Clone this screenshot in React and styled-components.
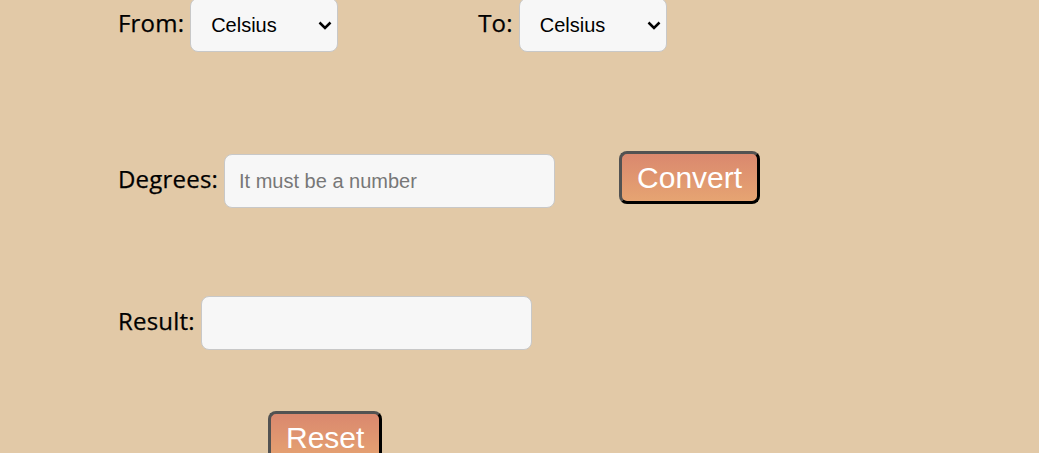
import React from "react";
import styled, { createGlobalStyle } from "styled-components";

const GlobalStyle = createGlobalStyle`
  body {
    margin: 0;
    background: #e2c9a7;
    font-family: "Open Sans", "Liberation Sans", sans-serif;
    overflow: hidden;
  }
`;

const Chevron = () => (
  <Arrow width="14" height="9" viewBox="0 0 14 9" aria-hidden="true">
    <path d="M1.5 1.5 L7 7 L12.5 1.5" fill="none" stroke="#000" strokeWidth="2.5" />
  </Arrow>
);

const UnitSelect = ({ value, onChange }) => (
  <SelectWrap>
    <Select value={value} onChange={onChange}>
      <option>Celsius</option>
      <option>Fahrenheit</option>
      <option>Kelvin</option>
    </Select>
    <Chevron />
  </SelectWrap>
);

const App = () => {
  const [from, setFrom] = React.useState("Celsius");
  const [to, setTo] = React.useState("Celsius");

  return (
    <>
      <GlobalStyle />
      <Page>
        <Row $top={-2}>
          <Group>
            <Label>From:</Label>
            <UnitSelect value={from} onChange={(e) => setFrom(e.target.value)} />
          </Group>
          <Group $gap={134}>
            <Label>To:</Label>
            <UnitSelect value={to} onChange={(e) => setTo(e.target.value)} />
          </Group>
        </Row>

        <Row $top={99}>
          <Label>Degrees:</Label>
          <Input placeholder="It must be a number" />
          <Button $left={58}>Convert</Button>
        </Row>

        <Row $top={88}>
          <Label>Result:</Label>
          <Input readOnly />
        </Row>

        <Row $top={61} $indent={268}>
          <Button>Reset</Button>
        </Row>
      </Page>
    </>
  );
};

const Page = styled.div`
  display: flex;
  flex-direction: column;
  padding-left: 118px;
`;
const Row = styled.div`
  display: flex;
  align-items: baseline;
  gap: 6px;
  margin-top: ${(p) => p.$top || 0}px;
  padding-left: ${(p) => (p.$indent ? p.$indent - 118 : 0)}px;
`;
const Group = styled.div`
  display: flex;
  align-items: baseline;
  gap: 6px;
  margin-left: ${(p) => p.$gap || 0}px;
`;
const Label = styled.label`
  font-family: "Open Sans", "Liberation Sans", sans-serif;
  font-size: 24px;
  letter-spacing: 0.2px;
  color: #000;
  -webkit-text-stroke: 0.25px #000;
`;
const SelectWrap = styled.div`
  position: relative;
  display: inline-flex;
`;
const Select = styled.select`
  appearance: none;
  -webkit-appearance: none;
  width: 148px;
  height: 54px;
  box-sizing: border-box;
  padding: 0 30px 0 20px;
  font-family: "Liberation Sans", Arial, sans-serif;
  font-size: 20px;
  color: #000;
  background: #f7f7f7;
  border: 1px solid #c8c8c8;
  border-radius: 8px;
`;
const Arrow = styled.svg`
  position: absolute;
  right: 6px;
  top: 50%;
  margin-top: -4px;
  pointer-events: none;
`;
const Input = styled.input`
  width: 331px;
  height: 54px;
  box-sizing: border-box;
  padding: 0 14px;
  font-family: "Liberation Sans", Arial, sans-serif;
  font-size: 20px;
  color: #000;
  background: #f7f7f7;
  border: 1px solid #c8c8c8;
  border-radius: 8px;
  outline: none;

  &::placeholder {
    color: #777;
  }
`;
const Button = styled.button`
  margin-left: ${(p) => p.$left || 0}px;
  height: 53px;
  padding: 0 15px;
  font-family: "Liberation Sans", Arial, sans-serif;
  font-size: 30px;
  color: #fff;
  background: linear-gradient(#da886e, #e6a472);
  border: 3px solid;
  border-color: #525252 #000 #000 #525252;
  border-radius: 8px;
  cursor: pointer;
`;

export default App;
